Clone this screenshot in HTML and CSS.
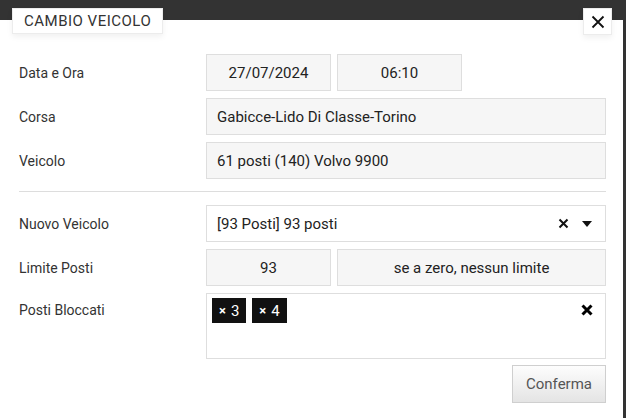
FILE: index.html
```html
<!DOCTYPE html>
<html lang="it">
<head>
<meta charset="utf-8">
<title>Cambio Veicolo</title>
<link rel="stylesheet" href="styles.css">
</head>
<body>
<div class="page">
  <div class="modal">
    <div class="head">
      <div class="title">CAMBIO VEICOLO</div>
      <button class="close" aria-label="Chiudi">
        <svg width="14" height="14" viewBox="0 0 14 14"><path d="M1.5 1.5 L12.5 12.5 M12.5 1.5 L1.5 12.5" stroke="#111" stroke-width="1.8" fill="none"/></svg>
      </button>
    </div>
    <div class="form">
      <div class="row">
        <div class="label">Data e Ora</div>
        <div class="fields">
          <div class="box ro center w125">27/07/2024</div>
          <div class="box ro center w125">06:10</div>
        </div>
      </div>
      <div class="row">
        <div class="label">Corsa</div>
        <div class="fields"><div class="box ro grow">Gabicce-Lido Di Classe-Torino</div></div>
      </div>
      <div class="row">
        <div class="label">Veicolo</div>
        <div class="fields"><div class="box ro grow">61 posti (140) Volvo 9900</div></div>
      </div>
      <hr class="sep">
      <div class="row">
        <div class="label">Nuovo Veicolo</div>
        <div class="fields">
          <div class="box select grow">
            <span class="sel-text">[93 Posti] 93 posti</span>
            <svg class="sel-clear" width="11" height="11" viewBox="0 0 11 11"><path d="M1.5 1.5 L9.5 9.5 M9.5 1.5 L1.5 9.5" stroke="#111" stroke-width="2" fill="none"/></svg>
            <svg class="sel-caret" width="10" height="6" viewBox="0 0 10 6"><path d="M0 0 L10 0 L5 6 Z" fill="#111"/></svg>
          </div>
        </div>
      </div>
      <div class="row">
        <div class="label">Limite Posti</div>
        <div class="fields">
          <div class="box ro center w125">93</div>
          <div class="box ro center grow">se a zero, nessun limite</div>
        </div>
      </div>
      <div class="row tall">
        <div class="label">Posti Bloccati</div>
        <div class="fields">
          <div class="box multi grow">
            <div class="tags">
              <span class="tag"><span class="tx">×</span>3</span>
              <span class="tag"><span class="tx">×</span>4</span>
            </div>
            <svg class="multi-clear" width="12" height="12" viewBox="0 0 12 12"><path d="M1.5 1.5 L10.5 10.5 M10.5 1.5 L1.5 10.5" stroke="#000" stroke-width="3" fill="none"/></svg>
          </div>
        </div>
      </div>
      <div class="actions"><button class="confirm">Conferma</button></div>
    </div>
  </div>
</div>
</body>
</html>
```
FILE: styles.css
```css
* { box-sizing: border-box; }
html, body { margin: 0; padding: 0; }
body {
  font-family: Roboto, "Liberation Sans", sans-serif;
  background: #333;
  color: #222;
}
.page {
  width: 626px;
  height: 418px;
  padding: 20px 3px 0 0;
  background: #333;
}
.modal {
  display: flow-root;
  background: #fff;
  height: 398px;
  width: 623px;
}
.head {
  display: flex;
  justify-content: space-between;
  align-items: flex-start;
  margin-top: -12px;
  padding: 0 11px 0 12px;
}
.title {
  height: 26px;
  width: 151px;
  background: #fff;
  border: 1px solid #ececec;
  box-shadow: 0 3px 6px rgba(0,0,0,0.06);
  font-size: 15px;
  color: #333;
  display: flex;
  align-items: center;
  padding-left: 11px;
  letter-spacing: 0.5px;
}
.close {
  width: 29px;
  height: 27px;
  background: #fff;
  border: 1px solid #ececec;
  box-shadow: 0 3px 6px rgba(0,0,0,0.06);
  padding: 0;
  display: flex;
  align-items: center;
  justify-content: center;
}
.form {
  padding: 0 17px 0 19px;
  margin-top: 19px;
}
.row {
  display: grid;
  grid-template-columns: 187px 1fr;
  align-items: center;
  height: 37px;
  margin-bottom: 7px;
}
.row.tall {
  height: 66px;
  align-items: start;
  margin-bottom: 6px;
}
.row.tall .label { padding-top: 9px; }
.label {
  font-size: 14px;
  color: #333;
}
.fields {
  display: flex;
  gap: 6px;
  height: 100%;
}
.box {
  height: 100%;
  border: 1px solid #dedede;
  font-size: 15px;
  color: #222;
  display: flex;
  align-items: center;
  padding: 0 10px;
}
.ro { background: #f6f6f6; }
.center { justify-content: center; }
.w125 { width: 125px; flex: none; }
.grow { flex: 1; }
.sep {
  border: 0;
  border-top: 1px solid #ddd;
  margin: 12px 0 13px 0;
  height: 0;
}
.select { background: #fff; }
.sel-text { flex: 1; }
.sel-clear { margin-right: 13px; }
.sel-caret { margin-right: 3px; }
.multi {
  background: #fff;
  align-items: flex-start;
  padding: 4px 12px 0 5px;
}
.tags { flex: 1; display: flex; gap: 6px; }
.tag {
  background: #111;
  color: #fff;
  height: 25px;
  padding: 0 7px 0 7px;
  display: flex;
  align-items: center;
  font-size: 15px;
}
.tx {
  font-weight: 700;
  font-size: 13px;
  margin-right: 5px;
}
.multi-clear { margin-top: 6px; }
.actions {
  display: flex;
  justify-content: flex-end;
}
.confirm {
  width: 94px;
  height: 38px;
  border: 1px solid #cfcfcf;
  background: linear-gradient(#fdfdfd, #e4e4e4);
  font-family: Roboto, "Liberation Sans", sans-serif;
  font-size: 15px;
  color: #555;
}
```
